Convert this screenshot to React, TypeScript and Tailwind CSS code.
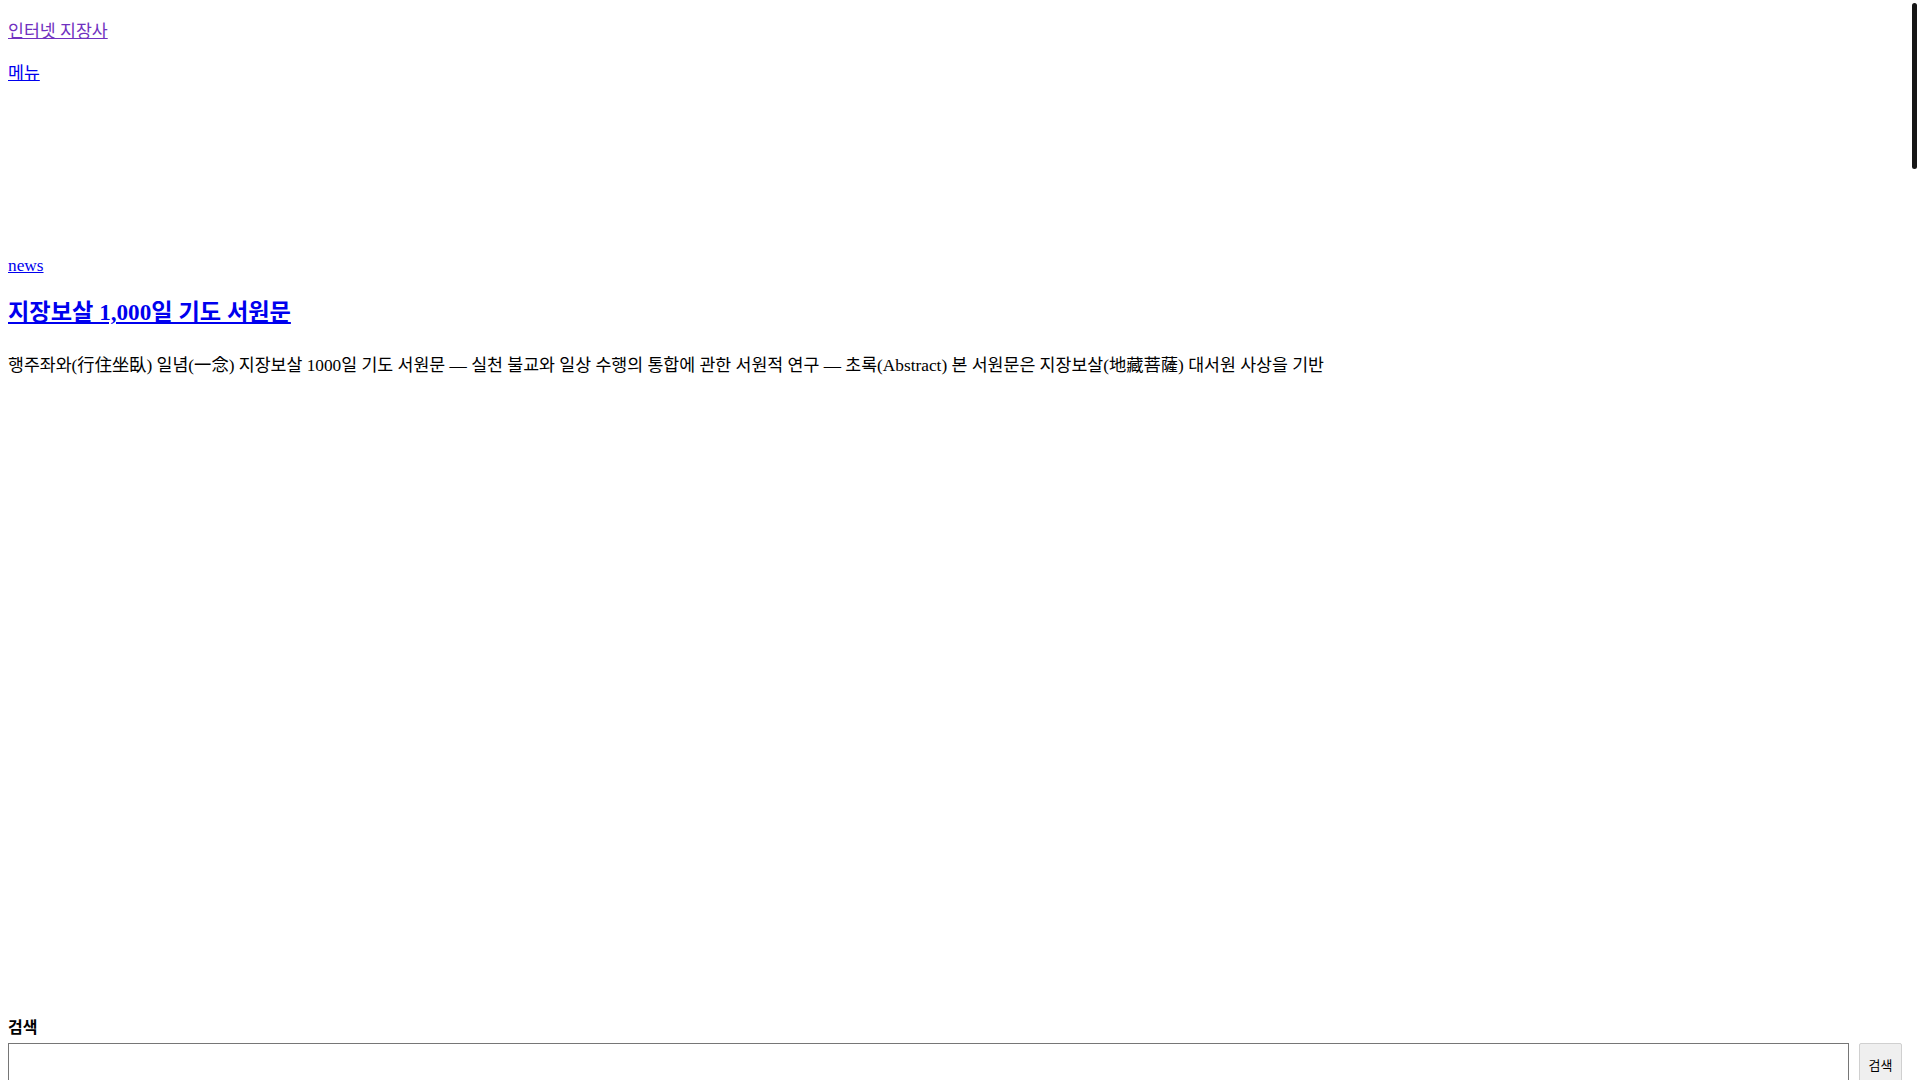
import React from "react";

const DESC =
  "행주좌와(行住坐臥) 일념(一念) 지장보살 1000일 기도 서원문 — 실천 불교와 일상 수행의 통합에 관한 서원적 연구 — 초록(Abstract) 본 서원문은 지장보살(地藏菩薩) 대서원 사상을 기반";

export default function App() {
  return (
    <div className="relative min-h-[6900px] bg-white px-2 pt-[17px] font-['Liberation_Serif','Noto_Sans_CJK_KR',serif] text-[17.3px] leading-[normal] text-black">
      <header className="flex flex-col gap-[17px]">
        <div>
          <a href="#home" className="text-[#7030c0] underline">
            인터넷 지장사
          </a>
        </div>
        <div>
          <a href="#menu" className="text-[#0000ee] underline">
            메뉴
          </a>
        </div>
      </header>
      <main className="mt-[172.3px]">
        <div>
          <a href="#news" className="text-[#0000ee] underline">
            news
          </a>
        </div>
        <h2 className="mt-[17.2px] text-[23.2px] font-bold">
          <a href="#post" className="text-[#0000ee] underline">
            지장보살 1,000일 기도 서원문
          </a>
        </h2>
        <p className="mt-[23.7px]">{DESC}</p>
      </main>
      <form className="mt-[638px]" onSubmit={(e) => e.preventDefault()}>
        <label className="block font-['Noto_Sans_CJK_KR',sans-serif] text-base font-bold">
          검색
        </label>
        <div className="mt-[4.4px] flex items-start gap-[10px] pr-[10px]">
          <input
            type="text"
            className="h-[43px] flex-1 border border-[#767676] bg-white px-2"
          />
          <button
            type="button"
            className="h-[43px] w-[43px] rounded-[2px] border border-[#d0d0d0] bg-[#efefef] font-['Noto_Sans_CJK_KR',sans-serif] text-[13px] text-black"
          >
            검색
          </button>
        </div>
      </form>
      <div className="fixed right-[3px] top-[3px] h-[166px] w-[5px] rounded-full bg-[#161616]" />
    </div>
  );
}
